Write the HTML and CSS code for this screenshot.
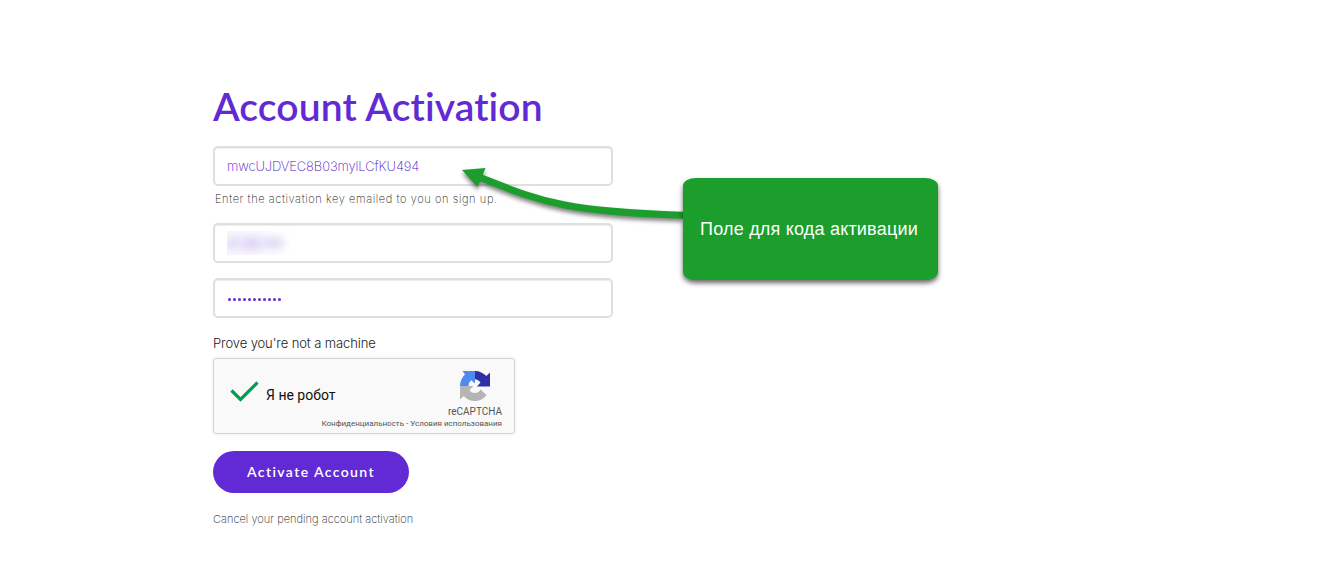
FILE: index.html
```
<!DOCTYPE html>
<html lang="en">
<head>
    <meta charset="UTF-8">
    <meta name="viewport" content="width=device-width, initial-scale=1.0">
    <title>Account Activation</title>
    <link rel="stylesheet" href="styles.css">
</head>
<body>

    <main class="activation">
        <h1>Account Activation</h1>

        <form id="activationForm">
            <!-- Activation key -->
            <input type="text" class="field key" name="key" value="mwcUJDVEC8B03mylLCfKU494">
            <p class="hint">Enter the activation key emailed to you on sign up.</p>

            <!-- Username, hidden by a blur -->
            <div class="field username">
                <div class="smudge"><i></i><i></i><i></i></div>
            </div>

            <!-- Password -->
            <div class="field password">
                <i></i><i></i><i></i><i></i><i></i><i></i><i></i><i></i><i></i><i></i><i></i>
            </div>

            <!-- Captcha -->
            <label class="prove">Prove you're not a machine</label>
            <div class="captcha">
                <svg class="check" width="30" height="24" viewBox="0 0 30 24">
                    <path d="M1.500 10.500 L10.500 19.500 L27.500 2.500" fill="none" stroke="#009e55" stroke-width="3.200"/>
                </svg>
                <span class="robot">Я не робот</span>
                <div class="brand">
                    <svg width="32" height="32" viewBox="0 0 32 32">
                        <path fill="#2f2fa8" d="M16 1 C20.500 1 24.500 3 27.300 6 L31 2.500 V16.500 H18 L21.500 12.500 C20 10.500 18.300 9.500 16 9.300 Z"/>
                        <path fill="#5089f0" d="M16 1 H3.500 L6 4.600 C3 7.300 1 11.200 1 16 H9.500 C9.500 13.500 10.500 11.700 12.200 10.300 L16 13.500 Z"/>
                        <path fill="#b5b5b5" d="M1 16 V29.500 L4.800 26 C7.500 29.200 11.500 31 16 31 C21 31 25 28.700 27.500 25 L21.500 19.500 C20.500 21.500 18.800 23 16 23 C13.500 23 11.500 22 10.500 20 L14.500 16 Z"/>
                    </svg>
                    <span>reCAPTCHA</span>
                </div>
                <p class="terms">Конфиденциальность - Условия использования</p>
            </div>

            <button type="submit" class="submit">Activate Account</button>
        </form>

        <a class="cancel">Cancel your pending account activation</a>
    </main>

    <!-- Callout over the form -->
    <svg class="arrow" width="233" height="80" viewBox="450 150 233 80">
        <path d="M479 177 C540 201 562 212 690 215.500" fill="none" stroke="#1c9e2c" stroke-width="7"/>
        <path d="M462 170 L485.500 168 L477.500 187 Z" fill="#1c9e2c"/>
    </svg>
    <div class="callout">Поле для кода активации</div>

</body>
</html>
```
FILE: styles.css
```
* {
    box-sizing: border-box;
}
body {
    margin: 0;
    background: #fff;
    font-family: Lato, sans-serif;
    color: #444;
}
.activation {
    width: 400px;
    margin-left: 213px;
    padding-top: 82px;
}
h1 {
    margin: 0 0 16px;
    font-size: 39px;
    line-height: 48px;
    font-weight: 600;
    letter-spacing: 0.12px;
    white-space: nowrap;
    color: #622ad4;
}
.field {
    display: block;
    width: 400px;
    height: 40px;
    padding: 0 12px;
    border: 2px solid #dfdfdf;
    border-radius: 5px;
    background: #fff;
    box-shadow: inset 0 1px 1px #eee;
    font: 200 13px Inter, sans-serif;
    color: #622ad4;
    outline: none;
}
.key {
    letter-spacing: -0.1px;
    color: #4a10c8;
}
.hint {
    margin: 5px 0 16px 2px;
    font: 200 11px/16px Inter, sans-serif;
    letter-spacing: 0.6px;
    white-space: nowrap;
    color: #222;
}
.username {
    display: flex;
    align-items: center;
    margin-bottom: 15px;
}
.smudge {
    display: flex;
    align-items: center;
    gap: 2px;
    width: 64px;
    height: 24px;
    overflow: hidden;
    background: linear-gradient(90deg, #f8f6fd, #fff);
}
.smudge i {
    width: 12px;
    height: 10px;
    background: #ddd5f4;
    filter: blur(4px);
}
.smudge i:nth-child(2) {
    width: 20px;
    height: 13px;
}
.smudge i:nth-child(3) {
    width: 20px;
}
.password {
    display: flex;
    align-items: center;
    gap: 2px;
    padding: 2px 0 0 13px;
}
.password i {
    width: 3px;
    height: 3px;
    border-radius: 50%;
    background: #622ad4;
}
.prove {
    display: block;
    margin: 16px 0 6px;
    font: 300 13px/18px Inter, sans-serif;
    letter-spacing: -0.1px;
    white-space: nowrap;
    color: #222;
}
.captcha {
    display: grid;
    grid-template-columns: 36px 1fr 54px;
    grid-template-rows: 49px 12px;
    width: 302px;
    height: 76px;
    padding: 10px 12px 3px 16px;
    border: 1px solid #d3d3d3;
    border-radius: 3px;
    background: #f9f9f9;
    box-shadow: 0 0 4px rgba(0, 0, 0, 0.08);
    font-family: Roboto, sans-serif;
}
.check {
    margin-top: 11px;
}
.robot {
    margin-top: 17px;
    font-size: 14px;
    line-height: 18px;
    color: #111;
}
.brand {
    display: flex;
    flex-direction: column;
    align-items: center;
    padding-top: 1px;
    gap: 1px;
    font-size: 10px;
    line-height: 17px;
    color: #555;
}
.brand svg {
    flex-shrink: 0;
}
.terms {
    grid-column: 1 / 4;
    margin: 0;
    font-size: 8px;
    line-height: 12px;
    text-align: right;
    color: #555;
}
.submit {
    display: block;
    width: 196px;
    height: 42px;
    margin-top: 17px;
    padding: 0 0 1px;
    border: none;
    border-radius: 21px;
    background: #622ad4;
    font: 600 14px Lato, sans-serif;
    letter-spacing: 1.4px;
    color: #fff;
    cursor: pointer;
}
.cancel {
    display: block;
    margin-top: 18px;
    font: 200 11px/16px Inter, sans-serif;
    letter-spacing: 0.03px;
    white-space: nowrap;
    color: #222;
}
.arrow {
    position: absolute;
    left: 450px;
    top: 150px;
    filter: drop-shadow(0 3px 2px rgba(0, 0, 0, 0.5));
}
.callout {
    position: absolute;
    left: 683px;
    top: 178px;
    width: 255px;
    height: 102px;
    padding-right: 3px;
    border-radius: 13px / 8px;
    background: #1c9e2c;
    box-shadow: 0 3px 5px rgba(0, 0, 0, 0.6);
    font: 18px/103px "Liberation Sans", Arial, sans-serif;
    letter-spacing: 0.2px;
    text-align: center;
    color: #fff;
}
```
